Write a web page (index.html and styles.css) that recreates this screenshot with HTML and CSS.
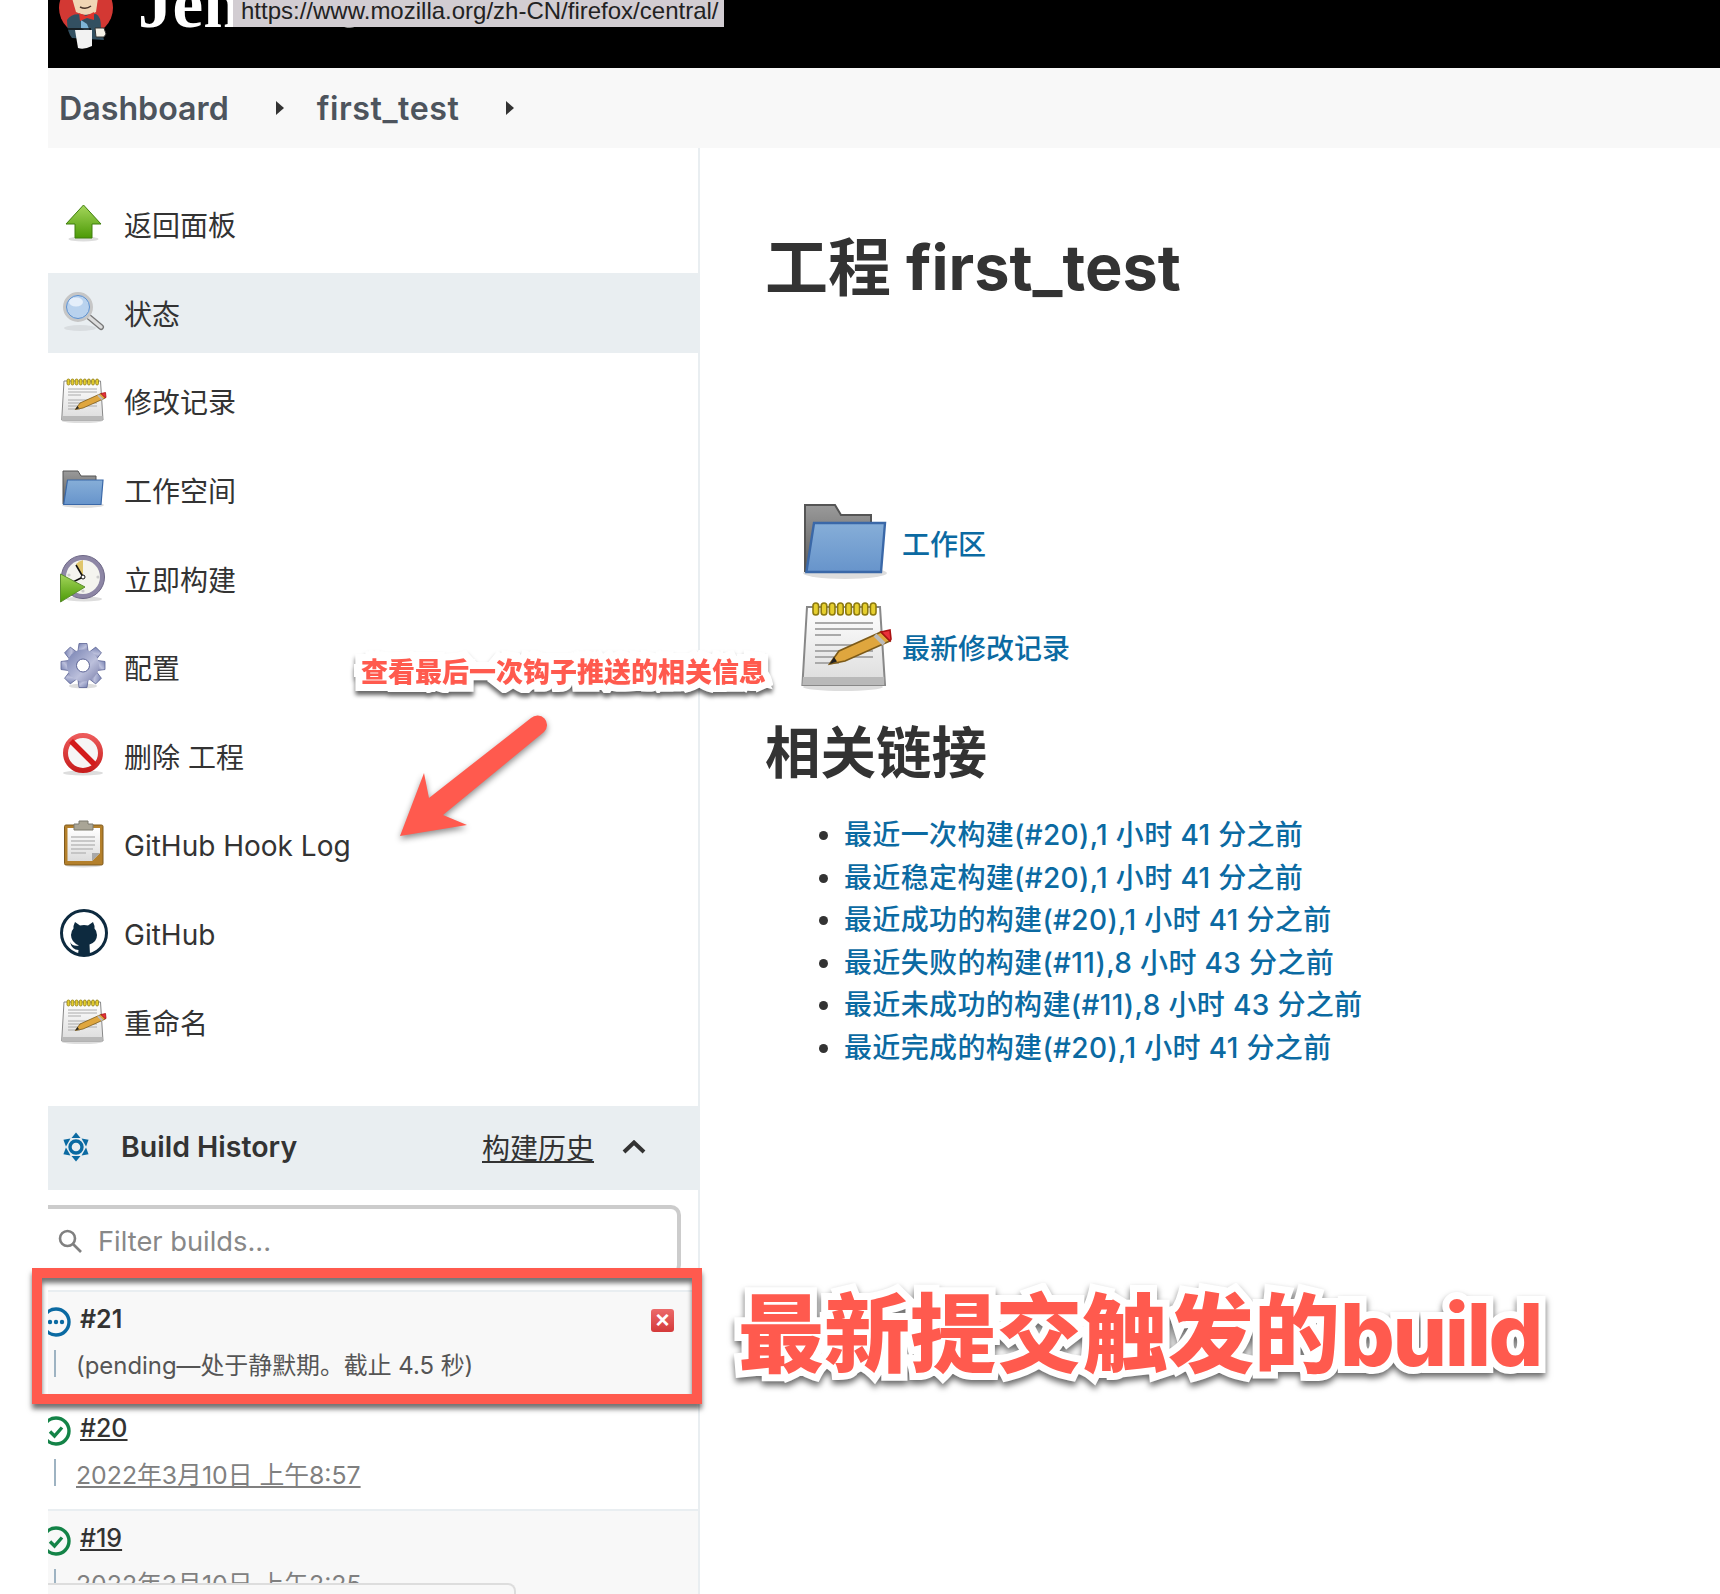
FILE: index.html
```html
<!DOCTYPE html><html><head><meta charset="utf-8"/>
<title>first_test [Jenkins]</title>
<link rel="stylesheet" href="styles.css">
</head>
<body>

<svg class="defs" aria-hidden="true">
  <defs>
    <linearGradient id="g-green" x1="0" y1="0" x2="0" y2="1"><stop offset="0" stop-color="#a5d65c"/><stop offset="1" stop-color="#4c9a06"/></linearGradient>
    <linearGradient id="g-blue" x1="0" y1="0" x2="0" y2="1"><stop offset="0" stop-color="#86aed8"/><stop offset="1" stop-color="#6794cb"/></linearGradient>
    <linearGradient id="g-grey" x1="0" y1="0" x2="0" y2="1"><stop offset="0" stop-color="#9a9a9a"/><stop offset="1" stop-color="#5c5c5c"/></linearGradient>
    <linearGradient id="g-paper" x1="0" y1="0" x2="0" y2="1"><stop offset="0" stop-color="#ffffff"/><stop offset="1" stop-color="#dcdcdc"/></linearGradient>
    <linearGradient id="g-gear" x1="0" y1="0" x2="1" y2="1"><stop offset="0" stop-color="#747fb0"/><stop offset=".6" stop-color="#bcc0dc"/><stop offset="1" stop-color="#7b80ab"/></linearGradient>
    <linearGradient id="g-red" x1="0" y1="0" x2="0" y2="1"><stop offset="0" stop-color="#ec5a5a"/><stop offset="1" stop-color="#c81e1e"/></linearGradient>

    <symbol id="i-up" viewBox="0 0 48 48">
      <ellipse cx="23.5" cy="39" rx="15" ry="2.5" fill="#ddd"/>
      <path d="M23.5 5 41 24H32V38H15V24H6Z" fill="url(#g-green)" stroke="#3f7f0c" stroke-width="1"/>
    </symbol>
    <symbol id="i-search" viewBox="0 0 48 48">
      <ellipse cx="20" cy="39" rx="16" ry="3" fill="#d9dde0"/>
      <path d="M29 28 41 38" stroke="#777" stroke-width="6" stroke-linecap="round"/>
      <path d="M29 28 41 38" stroke="#ddd" stroke-width="3.4" stroke-linecap="round"/>
      <circle cx="18" cy="18" r="13.5" fill="#b9d2ee" stroke="#c6c6c6" stroke-width="3"/>
      <circle cx="18" cy="18" r="11.5" fill="none" stroke="#5e8fcb" stroke-width="1"/>
      <ellipse cx="16" cy="13" rx="7" ry="4.5" fill="#e4eefa"/>
    </symbol>
    <symbol id="i-note" viewBox="0 0 48 48">
      <ellipse cx="22" cy="44" rx="20" ry="2" fill="#ddd"/>
      <path d="M4 4H40.500L43 43H1.700Z" fill="url(#g-paper)" stroke="#888" stroke-width="1"/>
      <path d="M2 39H42.600V43H1.700Z" fill="#b9b9b9"/>
      <g fill="#e6cf2e" stroke="#8d7a10" stroke-width=".8">
        <rect x="7" y="2" width="2.800" height="6" rx="1.400"/><rect x="11.100" y="2" width="2.800" height="6" rx="1.400"/><rect x="15.200" y="2" width="2.800" height="6" rx="1.400"/><rect x="19.300" y="2" width="2.800" height="6" rx="1.400"/><rect x="23.400" y="2" width="2.800" height="6" rx="1.400"/><rect x="27.500" y="2" width="2.800" height="6" rx="1.400"/><rect x="31.600" y="2" width="2.800" height="6" rx="1.400"/><rect x="35.700" y="2" width="2.800" height="6" rx="1.400"/>
      </g>
      <path d="M8 12H37M8 15H37M8 18H21M8 23H37M8 26H37M8 29H37M8 32H20" stroke="#aaa" stroke-width="1"/>
      <path d="M15.300 32.500 20 26 41 16.500 45.500 21 23 31Z" fill="#dfa63e" stroke="#7c5a18" stroke-width=".8"/>
      <path d="M41 16.500 45.500 15.500 46 20 45.500 21Z" fill="#e8303a" stroke="#a11" stroke-width=".8"/>
      <path d="M38 18 42.500 22.500" stroke="#bbb" stroke-width="2"/>
      <path d="M15.300 32.500 17.500 29 19 31.300Z" fill="#222"/>
    </symbol>
    <symbol id="i-folder" viewBox="0 0 48 48">
      <ellipse cx="23" cy="39" rx="21" ry="3" fill="#ddd"/>
      <path d="M3 5H18L21 10H36V38H3Z" fill="url(#g-grey)" stroke="#555" stroke-width="1"/>
      <path d="M7.500 14H43L41 38.500H3.700Z" fill="url(#g-blue)" stroke="#3a68a8" stroke-width="1.200"/>
    </symbol>
    <symbol id="i-clock" viewBox="0 0 48 48">
      <ellipse cx="24" cy="44" rx="18" ry="2.500" fill="#ddd"/>
      <circle cx="23" cy="22" r="21.500" fill="#8d86a5" stroke="#6d6786" stroke-width="1"/>
      <circle cx="23" cy="22" r="17" fill="#f4f4ef"/>
      <path d="M23 22 16 9Q19 6 23 5Z" fill="#e0c66c"/>
      <path d="M23 22 16 10M23 22 13 27" stroke="#111" stroke-width="1.600"/>
      <circle cx="23" cy="22" r="2" fill="#fff" stroke="#111" stroke-width="1"/>
      <circle cx="38" cy="22" r="1.600" fill="#ccc"/><circle cx="23" cy="36" r="1.600" fill="#ccc"/><circle cx="9" cy="20" r="1.600" fill="#ccc"/>
      <path d="M.500 19 25 32 .500 47Z" fill="url(#g-green)" stroke="#5c8d30" stroke-width="1"/>
    </symbol>
    <symbol id="i-gear" viewBox="0 0 48 48">
      <ellipse cx="23" cy="43" rx="14" ry="2.500" fill="#ddd"/>
      <g fill="url(#g-gear)" stroke="#5d6596" stroke-width=".8">
        <path d="M19 .500H27L28 8H18Z"/>
        <path d="M19 .500H27L28 8H18Z" transform="rotate(45 23 22.500)"/>
        <path d="M19 .500H27L28 8H18Z" transform="rotate(90 23 22.500)"/>
        <path d="M19 .500H27L28 8H18Z" transform="rotate(135 23 22.500)"/>
        <path d="M19 .500H27L28 8H18Z" transform="rotate(180 23 22.500)"/>
        <path d="M19 .500H27L28 8H18Z" transform="rotate(225 23 22.500)"/>
        <path d="M19 .500H27L28 8H18Z" transform="rotate(270 23 22.500)"/>
        <path d="M19 .500H27L28 8H18Z" transform="rotate(315 23 22.500)"/>
      </g>
      <circle cx="23" cy="22.500" r="16" fill="url(#g-gear)"/>
      <circle cx="23" cy="22.500" r="6.500" fill="#fff" stroke="#5d6596" stroke-width="1"/>
    </symbol>
    <symbol id="i-stop" viewBox="0 0 48 48">
      <ellipse cx="23" cy="41" rx="20" ry="2.500" fill="#ddd"/>
      <circle cx="23" cy="21" r="17.500" fill="#f6f6f6" stroke="url(#g-red)" stroke-width="5"/>
      <path d="M11 9 35 33" stroke="#d31c1c" stroke-width="5.500"/>
    </symbol>
    <symbol id="i-clip" viewBox="0 0 48 48">
      <ellipse cx="23.500" cy="46" rx="17" ry="1.500" fill="#ddd"/>
      <rect x="4.500" y="5" width="38.500" height="40" rx="1.500" fill="#b4802b" stroke="#7f5a1e" stroke-width="1"/>
      <path d="M7.500 8H40V33L32 41H7.500Z" fill="url(#g-paper)"/>
      <path d="M32 41 40 33H32Z" fill="#a9a9a9"/>
      <path d="M11 17H35M11 21H35M11 25H35M11 29H33M11 33H26" stroke="#bbb" stroke-width="1.400"/>
      <path d="M14 4H19V1H28V4H33V10H14Z" fill="#a9a596" stroke="#7d7a6e" stroke-width="1"/>
    </symbol>
    <symbol id="i-github" viewBox="0 0 48 48">
      <circle cx="24" cy="24" r="22.500" fill="#fff" stroke="#0d2a3f" stroke-width="3"/>
      <path d="M15 13 20 16.500Q24 15.500 28 16.500L33 13Q35 17 34.500 19.500 37 22 37 26 37 33 29.500 35.500L30 46H18L18.500 41Q12 41 10 33 13 38 19 36.500 11 33 11 26 11 22 13.500 19.500 13 17 15 13Z" fill="#0d2a3f"/>
    </symbol>
    <symbol id="i-ok" viewBox="0 0 30 30">
      <circle cx="15" cy="15" r="13" fill="none" stroke="#138347" stroke-width="3.400"/>
      <path d="M9 15.500 13.500 20 21 11.500" fill="none" stroke="#138347" stroke-width="3.400"/>
    </symbol>
  </defs>
</svg>

<div class="page">
  <div class="topbar">
    <svg class="butler" viewBox="0 0 64 52">
      <circle cx="32" cy="8" r="27" fill="#d33833"/>
      <path d="M18 -2Q32 -6 44 -2L42 12Q32 18 22 12Z" fill="#f0d6b5"/>
      <path d="M26 7Q32 10 37 6" fill="none" stroke="#49352a" stroke-width="1.500"/>
      <path d="M13 20Q18 12 30 15L42 14Q47 16 47 28L50 40 18 38Q13 32 13 20Z" fill="#335061"/>
      <path d="M27 20 33 24 37 34 27 28Z" fill="#7fb5d6"/>
      <path d="M25 13 32 16 40 12 40 20 33 18 26 21Z" fill="#e0342c"/>
      <path d="M21 30H38V46Q30 50 24 48Z" fill="#f2f2f2"/>
      <path d="M14 29H37" stroke="#111" stroke-width="1.500"/>
      <path d="M41 28H50L52 34 50 37H42Z" fill="#f5f1e6" stroke="#333" stroke-width="1"/>
    </svg>
    <span class="brand">Jenkins</span>
    <div class="urltip">https://www.mozilla.org/zh-CN/firefox/central/</div>
  </div>

  <div class="crumbs">
    <a class="crumb">Dashboard</a><i class="caret"></i>
    <a class="crumb job">first_test</a><i class="caret"></i>
  </div>

  <div class="layout">
    <div class="side">
      <div class="tasks">
        <a class="task"><svg class="ico"><use href="#i-up"/></svg>返回面板</a>
        <a class="task active"><svg class="ico"><use href="#i-search"/></svg>状态</a>
        <a class="task"><svg class="ico"><use href="#i-note"/></svg>修改记录</a>
        <a class="task"><svg class="ico"><use href="#i-folder"/></svg>工作空间</a>
        <a class="task"><svg class="ico"><use href="#i-clock"/></svg>立即构建</a>
        <a class="task"><svg class="ico"><use href="#i-gear"/></svg>配置</a>
        <a class="task"><svg class="ico"><use href="#i-stop"/></svg>删除 工程</a>
        <a class="task"><svg class="ico"><use href="#i-clip"/></svg><span class="en">GitHub Hook Log</span></a>
        <a class="task"><svg class="ico"><use href="#i-github"/></svg><span class="en">GitHub</span></a>
        <a class="task"><svg class="ico"><use href="#i-note"/></svg>重命名</a>
      </div>

      <div class="hist-head">
        <svg class="sun" viewBox="0 0 30 30">
          <circle cx="15" cy="15" r="6" fill="none" stroke="#0b6aa2" stroke-width="3.400"/>
          <g fill="#0b6aa2">
            <path d="M15 .5 19.500 6H10.500Z"/>
            <path d="M15 .5 19.500 6H10.500Z" transform="rotate(60 15 15)"/>
            <path d="M15 .5 19.500 6H10.500Z" transform="rotate(120 15 15)"/>
            <path d="M15 .5 19.500 6H10.500Z" transform="rotate(180 15 15)"/>
            <path d="M15 .5 19.500 6H10.500Z" transform="rotate(240 15 15)"/>
            <path d="M15 .5 19.500 6H10.500Z" transform="rotate(300 15 15)"/>
          </g>
        </svg>
        <b class="hist-title">Build History</b>
        <a class="hist-link">构建历史</a>
        <svg class="chev" viewBox="0 0 24 14"><path d="M2 12 12 2.500 22 12" fill="none" stroke="#333" stroke-width="4"/></svg>
      </div>

      <div class="filter">
        <svg class="lens" viewBox="0 0 24 24"><circle cx="9.500" cy="9.500" r="7.500" fill="none" stroke="#808080" stroke-width="2.600"/><path d="M15 15 23 23" stroke="#808080" stroke-width="2.600"/></svg>
        <span>Filter builds...</span>
      </div>

      <div class="builds">
        <div class="build alt">
          <div class="b-head">
            <svg class="b-ico" viewBox="0 0 30 30"><circle cx="15" cy="15" r="13" fill="none" stroke="#0b6aa2" stroke-width="3.400"/><circle cx="9" cy="15" r="2.200" fill="#0b6aa2"/><circle cx="15" cy="15" r="2.200" fill="#0b6aa2"/><circle cx="21" cy="15" r="2.200" fill="#0b6aa2"/></svg>
            <b class="b-num">#21</b>
            <span class="b-del">×</span>
          </div>
          <div class="b-info pending">(pending—处于静默期。截止 4.5 秒)</div>
        </div>
        <div class="build">
          <div class="b-head">
            <svg class="b-ico"><use href="#i-ok"/></svg>
            <a class="b-num done">#20</a>
          </div>
          <div class="b-info"><a>2022年3月10日 上午8:57</a></div>
        </div>
        <div class="build alt">
          <div class="b-head">
            <svg class="b-ico"><use href="#i-ok"/></svg>
            <a class="b-num done">#19</a>
          </div>
          <div class="b-info"><a>2022年3月10日 上午2:25</a></div>
        </div>
      </div>
    </div>

    <div class="main">
      <h1>工程 first_test</h1>
      <div class="ws">
        <a class="ws-row"><svg class="ws-ico"><use href="#i-folder"/></svg>工作区</a>
        <a class="ws-row"><svg class="ws-ico"><use href="#i-note"/></svg>最新修改记录</a>
      </div>
      <h2>相关链接</h2>
      <ul class="perma">
        <li><a>最近一次构建(#20),1 小时 41 分之前</a></li>
        <li><a>最近稳定构建(#20),1 小时 41 分之前</a></li>
        <li><a>最近成功的构建(#20),1 小时 41 分之前</a></li>
        <li><a>最近失败的构建(#11),8 小时 43 分之前</a></li>
        <li><a>最近未成功的构建(#11),8 小时 43 分之前</a></li>
        <li><a>最近完成的构建(#20),1 小时 41 分之前</a></li>
      </ul>
    </div>
  </div>
  <div class="pager"></div>
</div>

<!-- annotations drawn over the screenshot -->
<div class="note-small">查看最后一次钩子推送的相关信息</div>
<svg class="note-arrow" viewBox="395 710 155 135"><path d="M531 718 429 798 424 773 400 836 467 825 443 815 544 732A9.500 9.500 0 0 0 531 718Z" fill="#ff5a4e"/></svg>
<div class="note-box"></div>
<div class="note-big">最新提交触发的<span class="latin">build</span></div>

</body>
</html>
```

FILE: styles.css
```css
html, body {
  margin: 0;
  height: 100%;
}
body {
  position: relative;
  width: 1720px;
  height: 1594px;
  overflow: hidden;
  background: #fff;
  color: #333;
  font-family: Inter, "Noto Sans CJK SC", sans-serif;
  --blue: #0b6aa2;
  --line: #e9eef1;
  --red: #ff5a4e;
}
.defs {
  position: absolute;
  width: 0;
  height: 0;
}
.page {
  margin-left: 48px;
  height: 1594px;
  position: relative;
  overflow: hidden;
}

/* header */
.topbar {
  position: relative;
  display: flex;
  height: 68px;
  background: #000;
  overflow: hidden;
}
.butler {
  width: 64px;
  height: 52px;
  margin-left: 6px;
  flex: none;
}
.brand {
  margin: -36px 0 0 20px;
  font: bold 69px/80px "Liberation Serif", serif;
  color: #fff;
}
.urltip {
  position: absolute;
  left: 185px;
  top: 0;
  width: 491px;
  height: 27px;
  box-sizing: border-box;
  padding-left: 8px;
  background: #d2cdd2;
  color: #222;
  font: 24px/22px "Liberation Sans", sans-serif;
  white-space: nowrap;
}

/* breadcrumb */
.crumbs {
  display: flex;
  align-items: center;
  height: 80px;
  padding-left: 11px;
  background: #f8f8f8;
}
.crumb {
  font-size: 32.200px;
  font-weight: 600;
  color: #4d545d;
}
.crumb.job {
  letter-spacing: .55px;
}
.caret {
  width: 0;
  height: 0;
  margin: 0 33px 0 47px;
  border-left: 8px solid #333;
  border-top: 7px solid transparent;
  border-bottom: 7px solid transparent;
}

.layout {
  display: flex;
}

/* side panel */
.side {
  width: 650px;
  height: 1446px;
  flex: none;
  border-right: 2px solid var(--line);
  overflow: hidden;
}
.tasks {
  padding-top: 36px;
}
.task {
  display: flex;
  align-items: center;
  height: 80px;
  margin-bottom: 8.630px;
  padding-left: 12px;
  font-size: 28px;
  color: #333;
}
.task.active {
  background: var(--line);
}
.ico {
  width: 48px;
  height: 48px;
  margin-right: 16px;
  flex: none;
}
.en {
  margin-top: 3px;
}

/* build history */
.hist-head {
  display: flex;
  align-items: center;
  box-sizing: border-box;
  height: 84px;
  margin-top: 44px;
  padding: 0 0 2px 12px;
  background: var(--line);
}
.sun {
  width: 30px;
  height: 30px;
  margin: 0 30px 0 1px;
}
.hist-title {
  width: 361px;
  font-size: 28.500px;
  font-weight: 600;
}
.hist-link {
  font-size: 28px;
  text-decoration: underline;
}
.chev {
  width: 24px;
  height: 14px;
  margin-left: 28px;
}
.filter {
  display: flex;
  align-items: center;
  box-sizing: border-box;
  width: 633px;
  height: 70px;
  margin-top: 15px;
  padding: 2px 0 0 10px;
  border: 4px solid #ccc;
  border-left: 0;
  border-bottom-width: 3px;
  border-radius: 0 10px 10px 0;
  color: #888;
  font-size: 27.300px;
}
.lens {
  width: 24px;
  height: 24px;
  margin-right: 16px;
}
.builds {
  margin-top: 15px;
}
.build {
  box-sizing: border-box;
  height: 109.500px;
  border-top: 2px solid var(--line);
}
.build.alt {
  background: #f8f8f8;
}
.b-head {
  display: flex;
  align-items: center;
  height: 54px;
}
.b-ico {
  width: 30px;
  height: 30px;
  margin: 6px 9px 0 -7px;
  flex: none;
}
.b-num {
  font-size: 25px;
  font-weight: 600;
}
.b-num.done {
  font-weight: 500;
  text-decoration: underline;
}
.b-del {
  width: 23px;
  height: 23px;
  margin: 4px 24px 0 auto;
  border-radius: 3px;
  background: linear-gradient(#ec6a6a, #d43a3a);
  color: #fff;
  font: bold 24px/22px "Liberation Sans", sans-serif;
  text-align: center;
}
.b-info {
  display: flex;
  align-items: center;
  height: 27px;
  margin: 4px 0 0 6px;
  padding-left: 20px;
  border-left: 2px solid #9eb3c2;
  font-size: 24.800px;
  color: #555;
}
.b-info.pending {
  font-size: 23.900px;
}
.b-info a {
  color: #808080;
  text-decoration: underline;
}
.pager {
  position: absolute;
  left: 0;
  top: 1583px;
  width: 466px;
  height: 30px;
  border: 2px solid #ddd;
  border-left: 0;
  border-radius: 0 8px 0 0;
  background: #f8f8f8;
}

/* main */
.main {
  flex: 1;
  padding: 79px 0 0 65px;
}
h1 {
  margin: 0;
  font-size: 63px;
  line-height: 80px;
  font-weight: 700;
}
.ws {
  display: flex;
  flex-direction: column;
  gap: 8px;
  margin: 188px 0 0 34px;
}
.ws-row {
  display: flex;
  align-items: center;
  height: 96px;
  color: var(--blue);
  font-size: 28px;
  font-weight: 500;
}
.ws-ico {
  width: 96px;
  height: 96px;
  margin-right: 7px;
}
h2 {
  margin: 23px 0 0;
  font-size: 55.500px;
  line-height: 70px;
  font-weight: 700;
}
.perma {
  margin: 26px 0 0;
  padding-left: 79px;
  font-size: 28px;
  line-height: 42.600px;
}
.perma a {
  color: var(--blue);
  font-weight: 500;
  letter-spacing: .35px;
}

/* annotations */
.note-small {
  position: absolute;
  left: 361px;
  top: 653px;
  font-size: 27px;
  line-height: 40px;
  font-weight: 900;
  white-space: nowrap;
  color: var(--red);
  -webkit-text-stroke: 14px #fff;
  paint-order: stroke fill;
  filter: drop-shadow(0 4px 2px rgba(0, 0, 0, .6));
}
.note-arrow {
  position: absolute;
  left: 395px;
  top: 710px;
  width: 155px;
  height: 135px;
  filter: drop-shadow(0 3px 3px rgba(0, 0, 0, .45));
}
.note-box {
  position: absolute;
  left: 32px;
  top: 1268px;
  width: 650px;
  height: 116px;
  border: 10px solid var(--red);
  box-shadow: 0 5px 5px rgba(0, 0, 0, .55), inset 0 5px 5px rgba(0, 0, 0, .55);
}
.note-big {
  position: absolute;
  left: 738px;
  top: 1280px;
  font-size: 86px;
  line-height: 110px;
  font-weight: 900;
  white-space: nowrap;
  color: var(--red);
  -webkit-text-stroke: 14px #fff;
  paint-order: stroke fill;
  filter: drop-shadow(0 4px 3px rgba(0, 0, 0, .6));
}
.latin {
  font-weight: 800;
  letter-spacing: -2.400px;
}
```
